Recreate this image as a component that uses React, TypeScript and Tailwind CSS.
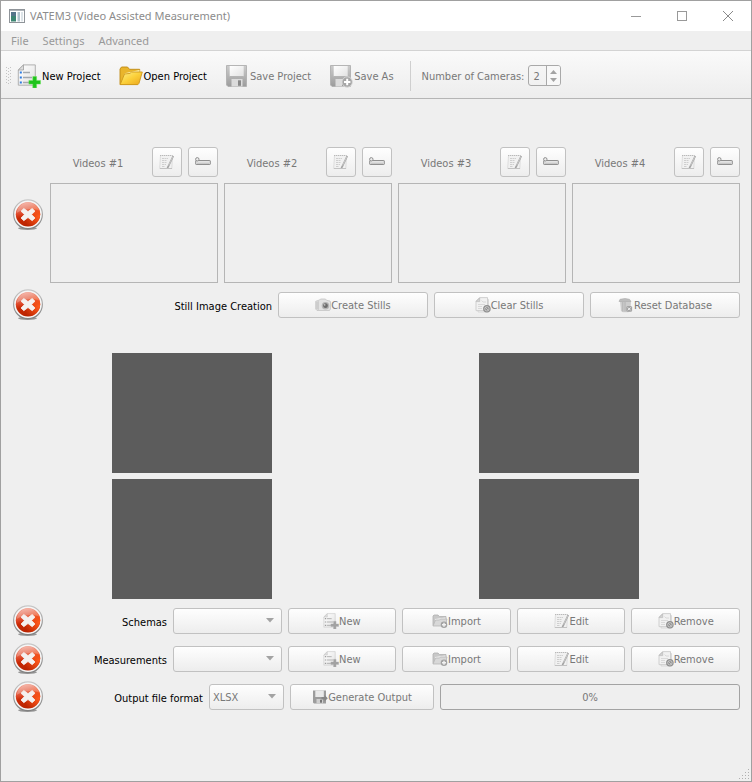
import { useId, type ReactNode } from "react";

function GradientDefs() {
  return (
    <svg width="0" height="0" className="absolute" aria-hidden="true">
      <defs>
        <linearGradient id="redBall" x1="0.3" y1="0" x2="0.5" y2="1">
          <stop offset="0" stopColor="#f3a392" />
          <stop offset="0.45" stopColor="#dd4526" />
          <stop offset="0.6" stopColor="#c92a06" />
          <stop offset="1" stopColor="#b82300" />
        </linearGradient>
        <radialGradient id="redGlow" cx="0.95" cy="0.6" r="0.6">
          <stop offset="0" stopColor="#ff5a1c" />
          <stop offset="1" stopColor="#ff5a1c" stopOpacity="0" />
        </radialGradient>
        <linearGradient id="ring" x1="0" y1="0" x2="0" y2="1">
          <stop offset="0" stopColor="#c8c8c8" />
          <stop offset="1" stopColor="#808080" />
        </linearGradient>
        <linearGradient id="folder" x1="0" y1="0" x2="1" y2="1">
          <stop offset="0" stopColor="#fdf08a" />
          <stop offset="0.5" stopColor="#fbd03a" />
          <stop offset="1" stopColor="#eba51c" />
        </linearGradient>
        <linearGradient id="metal" x1="0" y1="0" x2="0" y2="1">
          <stop offset="0" stopColor="#cccccc" />
          <stop offset="1" stopColor="#9c9c9c" />
        </linearGradient>
        <linearGradient id="paper" x1="0" y1="0" x2="1" y2="1">
          <stop offset="0" stopColor="#ffffff" />
          <stop offset="1" stopColor="#e2e2e2" />
        </linearGradient>
      </defs>
    </svg>
  );
}

function ErrorIcon() {
  return (
    <svg viewBox="0 0 32 32" className="size-8 shrink-0" role="img" aria-label="Incomplete">
      <ellipse cx="15.500" cy="29.300" rx="9.500" ry="1.600" fill="#6f6f6f" opacity="0.7" />
      <circle cx="16" cy="15.300" r="14.400" fill="#f6f6f6" stroke="url(#ring)" strokeWidth="1.200" />
      <circle cx="16" cy="15.300" r="12.200" fill="url(#redBall)" />
      <circle cx="16" cy="15.300" r="12.200" fill="url(#redGlow)" />
      <path d="M4.600 14a11.600 11.600 0 0 1 22.600-2.600C21 9.500 11 10 4.600 14z" fill="#fff" opacity="0.25" />
      <path
        d="M11.800 9.500 16 12.600 20.200 9.500 23 12.200 19.600 15.500 23 19 20.200 21.700 16 18.500 11.800 21.700 9 19 12.400 15.500 9 12.200z"
        fill="#f4f0ef"
        stroke="#f4f0ef"
        strokeWidth="0.800"
        strokeLinejoin="round"
      />
    </svg>
  );
}

function NewIcon({ muted = false, className }: { muted?: boolean; className: string }) {
  const line = muted ? "#b3b3b3" : "#a3a9ae";
  const dot = muted ? "#9c9c9c" : "#2c7be0";
  return (
    <svg viewBox="0 0 24 24" className={className} aria-hidden="true">
      <path d="M6.500 0.900h11.800v20.300H1.300V6z" fill="url(#paper)" stroke={muted ? "#c9c9c9" : "#a9a9a9"} strokeWidth="0.900" />
      <path d="M6.500 0.900V6H1.300z" fill="#dedede" stroke={muted ? "#c4c4c4" : "#a0a0a0"} strokeWidth="0.800" />
      <path d="M6 8.500h7M6 13.500h9M6 18.500h6" stroke={line} strokeWidth="1.500" />
      <path d="M2.800 8.500h2M2.800 13.500h2M2.800 18.500h2" stroke={dot} strokeWidth="1.800" />
      <path
        d="M15.800 12.500h3.800v3.900h3.900v3.700h-3.900V24h-3.800v-3.900h-3.900v-3.700h3.900z"
        fill={muted ? "#a2a2a2" : "#1fc41c"}
        stroke={muted ? "#b0b0b0" : "#6be25a"}
        strokeWidth="0.500"
      />
    </svg>
  );
}

function OpenIcon() {
  return (
    <svg viewBox="0 0 24 24" className="size-6" aria-hidden="true">
      <path d="M1 20.500V5l1.500-2h6l2 2.300h10.200V10L18 20.500z" fill="#e9b52c" stroke="#c08a14" strokeWidth="0.900" />
      <path d="M4.500 10.500l2.200-1.500 13.800-3v5z" fill="#fff3b0" />
      <path d="M1.200 20.600 5.500 10l5.500-.6 1.500-1.400h10.800L20 19.300l-1 1.300z" fill="url(#folder)" stroke="#cf9a1d" strokeWidth="0.900" />
    </svg>
  );
}

function SaveIcon({ plus = false }: { plus?: boolean }) {
  return (
    <svg viewBox="0 0 24 24" className="size-6" aria-hidden="true">
      <path d="M1.500 1.500h20v21H3l-1.500-1.500z" fill="url(#metal)" stroke="#b0b0b0" strokeWidth="0.900" />
      <rect x="4.700" y="2" width="14" height="10.500" fill="url(#paper)" />
      <path d="M4.700 12.500h14" stroke="#b4b4b4" />
      <rect x="6.500" y="15" width="11" height="7.500" fill="#dcdcdc" />
      <rect x="13" y="16.300" width="3" height="5.500" fill="#8a8a8a" />
      {plus && (
        <>
          <circle cx="18.200" cy="18" r="5.200" fill="#a6a6a6" stroke="#dadada" strokeWidth="0.900" />
          <path d="M18.200 14.800v6.400M15 18h6.400" stroke="#fff" strokeWidth="2" />
        </>
      )}
    </svg>
  );
}

function NotesIcon() {
  return (
    <svg viewBox="0 0 16 16" className="size-4" aria-hidden="true">
      <path d="M1.500 1.500h12l-.7 13H.7z" fill="#f1f1f1" stroke="#dadada" strokeWidth="0.900" />
      <path d="M1 1.500h12.500" stroke="#b9b9b9" strokeDasharray="1 1" />
      <path d="M3 4.500h6M3 6.500h5M3 8.500h5M3 10.500h4M3 12.500h3" stroke="#cbcbcb" strokeDasharray="2 0.500" strokeWidth="0.900" />
      <path d="M14.300 2 9.300 12.300l-.9 1.800" stroke="#a3a3a3" strokeWidth="1.700" />
      <path d="M14 2.500 9.600 11.500" stroke="#dcdcdc" strokeWidth="0.600" />
      <path d="M1 14.500h12" stroke="#c2c2c2" />
    </svg>
  );
}

function RulerIcon() {
  return (
    <svg viewBox="0 0 16 16" className="size-4" aria-hidden="true">
      <rect x="0.700" y="6.500" width="14.600" height="4" rx="0.500" fill="#e4e4e4" stroke="#8f8f8f" />
      <path d="M3 8.700v1.500M5 8.700v1.500M7 8.700v1.500M9 8.700v1.500M11 8.700v1.500M13 8.700v1.500" stroke="#a0a0a0" strokeWidth="0.800" />
      <circle cx="2.300" cy="5.300" r="1.700" fill="#eee" stroke="#8f8f8f" />
    </svg>
  );
}

function CameraIcon() {
  return (
    <svg viewBox="0 0 16 16" className="size-4" aria-hidden="true">
      <path d="M.7 4.300 4.500 3l1-1h5l1 1.300 3.500.7.500 1v7l-1 1.500H2L.700 12z" fill="#e2e2e2" stroke="#c4c4c4" strokeWidth="0.800" />
      <path d="M1 5v7l3 1V4z" fill="#cdcdcd" />
      <circle cx="10.500" cy="8.700" r="3.800" fill="#b6b6b6" />
      <circle cx="10.500" cy="8.700" r="2.400" fill="#6c6c6c" />
      <circle cx="9.700" cy="7.900" r="0.800" fill="#c6c6c6" />
    </svg>
  );
}

function RemoveIcon() {
  return (
    <svg viewBox="0 0 16 16" className="size-4" aria-hidden="true">
      <path d="M4.500 2.500h9v12.500H3z" fill="#f2f2f2" stroke="#d2d2d2" strokeWidth="0.800" />
      <path d="M4.500.6h8v13H1V4z" fill="#f1f1f1" stroke="#cccccc" strokeWidth="0.900" />
      <path d="M1.200 4.600 4.700 1v3.600z" fill="#d4d4d4" stroke="#b6b6b6" strokeWidth="0.600" />
      <path d="M6.500 3.500 8 5h3M3 7.500h7M3 9.500h4M3 11.500h4" stroke="#d6d6d6" strokeWidth="0.900" fill="none" />
      <circle cx="11.900" cy="11.800" r="3.800" fill="#8f8f8f" />
      <circle cx="11.900" cy="11.800" r="2.200" fill="none" stroke="#d4d4d4" strokeWidth="0.800" />
      <path d="M10.400 10.300l3 3" stroke="#d4d4d4" strokeWidth="0.800" />
    </svg>
  );
}

function TrashIcon() {
  return (
    <svg viewBox="0 0 16 16" className="size-4" aria-hidden="true">
      <path d="M2 4h11l-.7 10-2 1.300H5L3 14z" fill="#cdcdcd" />
      <path d="M4.800 5v9.500M7 5v9.500" stroke="#b2b2b2" />
      <path d="M1 4.500 2 2.300l5-.8 4.500.8 1.500 2.200z" fill="#bdbdbd" stroke="#ababab" strokeWidth="0.600" />
      <rect x="8.300" y="9" width="5.800" height="5.800" rx="1.500" fill="#a3a3a3" />
      <path d="M9.800 10.500l2.800 2.800M12.600 10.500l-2.800 2.800" stroke="#f4f4f4" />
    </svg>
  );
}

function ImportIcon() {
  return (
    <svg viewBox="0 0 16 16" className="size-4" aria-hidden="true">
      <path d="M1 12.500V3l1-1h4l1.300 1.500h6.700v9z" fill="#c8c8c8" stroke="#b0b0b0" strokeWidth="0.800" />
      <path d="M3 6l10.500-1.500v3H3z" fill="#f1f1f1" />
      <path d="M1 13 3.500 7h4l1-1h6.500l-1.800 7z" fill="#d8d8d8" stroke="#b6b6b6" strokeWidth="0.800" />
      <circle cx="12" cy="11.800" r="3.300" fill="#a3a3a3" />
      <path d="M12 9.800v4M10 11.800h4" stroke="#f2f2f2" strokeWidth="1.400" />
    </svg>
  );
}

function ExportIcon() {
  return (
    <svg viewBox="0 0 16 16" className="size-4" aria-hidden="true">
      <path d="M1 1.500h13v13H2l-1-1z" fill="#9c9c9c" />
      <rect x="3.300" y="1.500" width="8.500" height="6.500" fill="#e9e9e9" />
      <rect x="4.500" y="10" width="6.500" height="4.500" fill="#cfcfcf" />
      <rect x="8" y="10.700" width="2" height="3" fill="#777777" />
      <path d="M9.500 8h3V6l3.300 3.300L12.500 12.500v-2h-3z" fill="#868686" />
    </svg>
  );
}

const surface = "rounded-[3px] border border-[#c1c1c1] bg-linear-to-b from-[#fefefe] to-[#ededed] text-[#787878]";

function PushButton({ icon, children, className = "" }: { icon: ReactNode; children: ReactNode; className?: string }) {
  return (
    <button type="button" disabled className={`flex h-[26px] min-w-0 items-center justify-center ${surface} ${className}`}>
      {icon}
      <span className="pt-0.5 whitespace-nowrap">{children}</span>
    </button>
  );
}

function SelectBox({ id, value = "", className = "" }: { id: string; value?: string; className?: string }) {
  return (
    <div className={`relative ${className}`}>
      <select id={id} disabled defaultValue={value} className={`block h-[26px] w-full appearance-none px-[3px] pt-0.5 opacity-100 ${surface}`}>
        <option>{value}</option>
      </select>
      <svg viewBox="0 0 8 5" className="pointer-events-none absolute top-2.5 right-2 h-[5px] w-2" aria-hidden="true">
        <path d="M0 0h8L4 4.500z" fill="#a3a3a3" />
      </svg>
    </div>
  );
}

function StepRow({ children }: { children: ReactNode }) {
  return (
    <div className="flex items-center gap-1.5">
      <ErrorIcon />
      {children}
    </div>
  );
}

function VideoPanel({ index }: { index: number }) {
  return (
    <section className="flex min-w-0 flex-1 flex-col gap-1.5">
      <div className="flex items-center gap-1.5">
        <h2 className="flex-1 pt-1 text-center">Videos #{index}</h2>
        <button type="button" disabled aria-label="Edit notes" className={`grid size-[30px] place-items-center ${surface}`}>
          <NotesIcon />
        </button>
        <button type="button" disabled aria-label="Calibrate" className={`grid size-[30px] place-items-center ${surface}`}>
          <RulerIcon />
        </button>
      </div>
      <div className="h-[100px] border border-[#b5b5b5]" />
    </section>
  );
}

function RecordRow({ label }: { label: string }) {
  const id = useId();
  return (
    <StepRow>
      <div className="grid flex-1 grid-cols-[117px_repeat(5,minmax(0,1fr))] items-center gap-1.5">
        <label htmlFor={id} className="pt-1 text-right text-black">{label}</label>
        <SelectBox id={id} />
        <PushButton icon={<NewIcon muted className="size-4" />}>New</PushButton>
        <PushButton icon={<ImportIcon />}>Import</PushButton>
        <PushButton icon={<NotesIcon />}>Edit</PushButton>
        <PushButton icon={<RemoveIcon />}>Remove</PushButton>
      </div>
    </StepRow>
  );
}

function ToolButton({ icon, children, disabled = false }: { icon: ReactNode; children: ReactNode; disabled?: boolean }) {
  return (
    <button type="button" disabled={disabled} className="flex items-center gap-px whitespace-nowrap text-black disabled:text-[#787878]">
      {icon}
      <span className="pt-0.5">{children}</span>
    </button>
  );
}

export default function App() {
  return (
    <div className="flex min-h-screen w-full flex-col border border-[#a0a0a0] bg-[#efefef] font-['DejaVu_Sans_Condensed','DejaVu_Sans',sans-serif] text-[11px] leading-4 text-[#787878]">
      <GradientDefs />
      <header className="flex h-[30px] items-center bg-white pl-2 font-['Noto_Sans',sans-serif] text-[#8c8c8c]">
        <svg viewBox="0 0 16 14" className="mr-[5px] h-3.5 w-4" aria-hidden="true">
          <rect x="0.500" y="0.500" width="15" height="13" fill="#fff" stroke="#8f9499" />
          <path d="M1 1.500h14" stroke="#aeb4b9" />
          <rect x="2" y="3" width="5" height="9.500" fill="#3c8572" />
          <rect x="2" y="3" width="5" height="4" fill="#55758a" />
          <rect x="8.500" y="3" width="2.500" height="9.500" fill="#aec2cb" />
          <rect x="12" y="3" width="2" height="9.500" fill="#dde4e8" />
        </svg>
        <h1 className="flex-1">VATEM3 (Video Assisted Measurement)</h1>
        <button type="button" aria-label="Minimize" className="grid h-full w-[46px] place-items-center">
          <span className="h-px w-2.5 bg-[#999999]" />
        </button>
        <button type="button" aria-label="Maximize" className="grid h-full w-[46px] place-items-center">
          <span className="size-2.5 border border-[#999999]" />
        </button>
        <button type="button" aria-label="Close" className="grid h-full w-[46px] place-items-center">
          <svg viewBox="0 0 10 10" className="size-2.5" aria-hidden="true">
            <path d="M0 0l10 10M10 0L0 10" stroke="#8a8a8a" />
          </svg>
        </button>
      </header>

      <nav className="flex h-[20px] items-center gap-3.5 border-b border-[#d3d3d3] px-2.5 font-['Noto_Sans',sans-serif] text-[#999999]">
        <button type="button">File</button>
        <button type="button">Settings</button>
        <button type="button">Advanced</button>
      </nav>

      <div className="flex h-12 items-center border-b border-[#b5b5b5] bg-linear-to-b from-[#fafafa] to-[#ededed] pt-0.5 pl-1">
        <svg viewBox="0 0 7 18" className="mr-[5px] h-[18px] w-[7px]" aria-hidden="true">
          <path d="M1.500 0v18M3.500 1v17M5.500 0v18" stroke="#c4c4c4" strokeDasharray="1 2" />
        </svg>
        <div className="flex items-center gap-[18px]">
          <ToolButton icon={<NewIcon className="size-6" />}>New Project</ToolButton>
          <ToolButton icon={<OpenIcon />}>Open Project</ToolButton>
          <ToolButton disabled icon={<SaveIcon />}>Save Project</ToolButton>
          <ToolButton disabled icon={<SaveIcon plus />}>Save As</ToolButton>
        </div>
        <div className="mr-[11px] ml-4 h-[30px] w-px bg-[#cfcfcf]" />
        <label htmlFor="cameras" className="mr-1 pt-0.5 whitespace-nowrap">Number of Cameras:</label>
        <div className="flex h-[21px] w-[33px] overflow-hidden rounded-[3px] border border-[#a9a9a9]">
          <input
            id="cameras"
            type="number"
            defaultValue={2}
            disabled
            className="w-[18px] appearance-none border-r border-[#a9a9a9] pt-0.5 pl-1 [&::-webkit-inner-spin-button]:appearance-none"
          />
          <div className="flex flex-1 flex-col items-center justify-center gap-1 bg-[#f8f8f8]">
            <button type="button" disabled aria-label="More cameras">
              <svg viewBox="0 0 7 4" className="h-1 w-[7px]" aria-hidden="true"><path d="M0 4h7L3.500 0z" fill="#a3a3a3" /></svg>
            </button>
            <button type="button" disabled aria-label="Fewer cameras">
              <svg viewBox="0 0 7 4" className="h-1 w-[7px]" aria-hidden="true"><path d="M0 0h7L3.500 4z" fill="#a3a3a3" /></svg>
            </button>
          </div>
        </div>
      </div>

      <main className="flex flex-1 flex-col gap-1.5 px-[11px] pt-12">
        <StepRow>
          <div className="flex flex-1 gap-1.5">
            {[1, 2, 3, 4].map((n) => (
              <VideoPanel key={n} index={n} />
            ))}
          </div>
        </StepRow>

        <StepRow>
          <span className="flex-1 pt-1 text-right text-black">Still Image Creation</span>
          <PushButton className="w-[150px]" icon={<CameraIcon />}>Create Stills</PushButton>
          <PushButton className="w-[150px]" icon={<RemoveIcon />}>Clear Stills</PushButton>
          <PushButton className="w-[150px]" icon={<TrashIcon />}>Reset Database</PushButton>
        </StepRow>

        <div className="grid grid-cols-2 justify-items-center gap-1.5 pt-[26px] pr-px">
          {[1, 2, 3, 4].map((n) => (
            <div key={n} className="h-[120px] w-40 bg-[#5c5c5c]" />
          ))}
        </div>

        <RecordRow label="Schemas" />
        <RecordRow label="Measurements" />

        <StepRow>
          <label htmlFor="format" className="flex-1 pt-1 text-right text-black">Output file format</label>
          <SelectBox id="format" value="XLSX" className="w-[75px]" />
          <PushButton className="w-36" icon={<ExportIcon />}>Generate Output</PushButton>
          <div
            role="progressbar"
            aria-label="Output progress"
            aria-valuenow={0}
            className="flex h-[26px] w-[300px] items-center justify-center rounded-[3px] border border-[#a3a3a3] pt-0.5"
          >
            0%
          </div>
        </StepRow>
      </main>

      <footer className="flex justify-end p-px">
        <svg viewBox="0 0 12 12" className="size-3" aria-hidden="true">
          <path d="M10.500 1v10M7.500 4v7M4.500 7v4M1.500 10v1" stroke="#b0b0b0" strokeDasharray="1 2" />
        </svg>
      </footer>
    </div>
  );
}
